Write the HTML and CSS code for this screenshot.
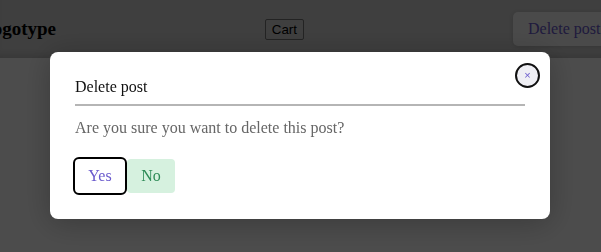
FILE: index.html
```html
<!DOCTYPE html>
<html>
<head>
<meta charset="utf-8">
<link rel="stylesheet" href="styles.css">
</head>
<body>
<header class="topbar">
  <span class="logo">Logotype</span>
  <button class="cart">Cart</button>
  <button class="open-delete">Delete post</button>
</header>
<div class="overlay"></div>
<div class="modal" role="dialog">
  <button class="close" aria-label="Close">×</button>
  <h2 class="modal-title">Delete post</h2>
  <hr class="divider">
  <p class="modal-text">Are you sure you want to delete this post?</p>
  <div class="actions">
    <button class="btn-yes">Yes</button>
    <button class="btn-no">No</button>
  </div>
</div>
</body>
</html>
```
FILE: styles.css
```css
html, body {
  margin: 0;
  padding: 0;
  width: 601px;
  height: 252px;
  overflow: hidden;
  background: #ffffff;
  font-family: "Liberation Serif", "Times New Roman", serif;
}
.topbar {
  height: 58px;
  display: flex;
  align-items: center;
  background: #d2d2d2;
  box-shadow: inset 0 -7px 6px -4px rgba(0,0,0,0.12);
  width: 640px;
}
.logo {
  font-weight: bold;
  font-size: 19px;
  margin-left: -20px;
  color: #000;
}
.cart {
  margin-left: auto;
  font-family: "Liberation Sans", Arial, sans-serif;
  font-size: 13.33px;
  height: 21px;
  padding: 0 6px;
  border: 1px solid #767676;
  border-radius: 2px;
  background: #d2d2d2;
  color: #000;
  margin-right: 209px;
}
.open-delete {
  font-family: "Liberation Serif", "Times New Roman", serif;
  font-size: 16px;
  height: 34px;
  width: 120px;
  padding: 0 15px;
  text-align: left;
  border: none;
  border-radius: 5px;
  background: #f7f7f7;
  color: #6a5acd;
  margin-right: 7px;
  flex-shrink: 0;
  box-shadow: 0 1px 4px rgba(0,0,0,0.15);
}
.overlay {
  position: fixed;
  inset: 0;
  background: rgba(0,0,0,0.7);
}
.modal {
  position: fixed;
  top: 52px;
  left: 50px;
  width: 500px;
  height: 167px;
  box-sizing: border-box;
  padding: 26px 25px 24px;
  background: #fff;
  border-radius: 8px;
  box-shadow: 0 4px 30px rgba(0,0,0,0.25);
}
.close {
  position: absolute;
  top: 11px;
  right: 10px;
  width: 25px;
  height: 25px;
  box-sizing: border-box;
  border: 2px solid #111;
  border-radius: 50%;
  background: #efeff4;
  color: #6a5acd;
  font-size: 11px;
  line-height: 1;
  padding: 0;
  font-family: "Liberation Sans", Arial, sans-serif;
}
.modal-title {
  margin: 0;
  font-size: 16px;
  font-weight: normal;
  line-height: 18px;
  color: #111;
}
.divider {
  margin: 8px 0 0;
  border: none;
  border-top: 2px solid #b5b5b5;
  height: 0;
}
.modal-text {
  margin: 13px 0 0;
  font-size: 16px;
  line-height: 18px;
  color: #666;
}
.actions {
  margin-top: 20px;
  display: flex;
  align-items: center;
}
.btn-yes {
  height: 38px;
  width: 54px;
  box-sizing: border-box;
  border: 2px solid #000;
  border-radius: 6px;
  background: #fff;
  color: #6a5acd;
  font-family: "Liberation Serif", "Times New Roman", serif;
  font-size: 16px;
  padding: 0;
  margin-left: -2px;
}
.btn-no {
  height: 34px;
  width: 48px;
  border: none;
  border-radius: 4px;
  background: #d6f1df;
  color: #2e8b57;
  font-family: "Liberation Serif", "Times New Roman", serif;
  font-size: 16px;
  padding: 0;
}
```
